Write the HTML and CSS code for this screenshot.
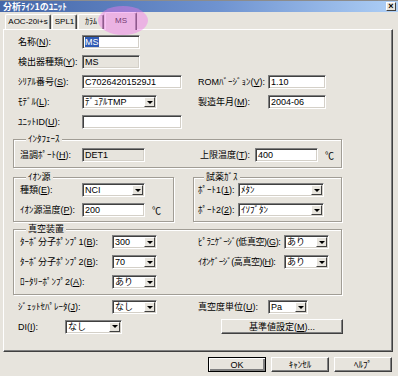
FILE: index.html
```html
<!DOCTYPE html>
<html lang="ja">
<head>
    <meta charset="UTF-8">
    <title>分析ﾗｲﾝ1のﾕﾆｯﾄ</title>
    <link rel="stylesheet" href="styles.css">
</head>
<body>

<div class="window">
    <!-- タイトルバー -->
    <div class="titlebar">
        <span class="title">分析ﾗｲﾝ1のﾕﾆｯﾄ</span>
        <span class="close">×</span>
    </div>

    <!-- タブ -->
    <div class="tabs">
        <div class="tab t-aoc">AOC-20i+s</div>
        <div class="tab t-spl">SPL1</div>
        <div class="tab t-col">ｶﾗﾑ</div>
        <div class="tab t-ms active">MS</div>
    </div>

    <div class="panel">
        <!-- 基本情報 -->
        <div class="info">
            <div class="row">
                <span class="lbl w64">名称(<u>N</u>):</span>
                <span class="edit w58"><span class="selected">MS</span></span>
            </div>
            <div class="row">
                <span class="lbl w64">検出器種類(<u>Y</u>):</span>
                <span class="edit ro w58">MS</span>
            </div>
            <div class="row">
                <span class="lbl w64">ｼﾘｱﾙ番号(<u>S</u>):</span>
                <span class="edit w100">C70264201529J1</span>
                <span class="lbl w70 gap16">ROMﾊﾞｰｼﾞｮﾝ(<u>V</u>):</span>
                <span class="edit w58">1.10</span>
            </div>
            <div class="row">
                <span class="lbl w64">ﾓﾃﾞﾙ(<u>L</u>):</span>
                <span class="combo w75"><span class="val">ﾃﾞｭｱﾙTMP</span><span class="drop"></span></span>
                <span class="lbl w70 gap41">製造年月(<u>M</u>):</span>
                <span class="edit w58">2004-06</span>
            </div>
            <div class="row">
                <span class="lbl w64">ﾕﾆｯﾄID(<u>U</u>):</span>
                <span class="edit w100"></span>
            </div>
        </div>

        <!-- インタフェース -->
        <div class="group g-iface">
            <div class="group-title">ｲﾝﾀﾌｪｰｽ</div>
            <div class="row">
                <span class="lbl w62">温調ﾎﾟｰﾄ(<u>H</u>):</span>
                <span class="edit ro w63">DET1</span>
                <span class="lbl w55 gap55">上限温度(<u>T</u>):</span>
                <span class="edit w63">400</span>
                <span class="unit">℃</span>
            </div>
        </div>

        <div class="pair">
            <!-- イオン源 -->
            <div class="group g-ion">
                <div class="group-title">ｲｵﾝ源</div>
                <div class="row">
                    <span class="lbl w62">種類(<u>E</u>):</span>
                    <span class="combo w63"><span class="val">NCI</span><span class="drop"></span></span>
                </div>
                <div class="row">
                    <span class="lbl w62">ｲｵﾝ源温度(<u>P</u>):</span>
                    <span class="edit w63">200</span>
                    <span class="unit">℃</span>
                </div>
            </div>

            <!-- 試薬ガス -->
            <div class="group g-gas">
                <div class="group-title">試薬ｶﾞｽ</div>
                <div class="row">
                    <span class="lbl w40">ﾎﾟｰﾄ1(<u>1</u>):</span>
                    <span class="combo w86"><span class="val">ﾒﾀﾝ</span><span class="drop"></span></span>
                </div>
                <div class="row">
                    <span class="lbl w40">ﾎﾟｰﾄ2(<u>2</u>):</span>
                    <span class="combo w86"><span class="val">ｲｿﾌﾞﾀﾝ</span><span class="drop"></span></span>
                </div>
            </div>
        </div>

        <!-- 真空装置 -->
        <div class="group g-vac">
            <div class="group-title">真空装置</div>
            <div class="row">
                <span class="lbl w92">ﾀｰﾎﾞ分子ﾎﾟﾝﾌﾟ1(<u>B</u>):</span>
                <span class="combo w45"><span class="val">300</span><span class="drop"></span></span>
                <span class="lbl narrow w86 gap41">ﾋﾟﾗﾆｹﾞｰｼﾞ(低真空)(<u>G</u>):</span>
                <span class="combo w45"><span class="val">あり</span><span class="drop"></span></span>
            </div>
            <div class="row">
                <span class="lbl w92">ﾀｰﾎﾞ分子ﾎﾟﾝﾌﾟ2(<u>B</u>):</span>
                <span class="combo w45"><span class="val">70</span><span class="drop"></span></span>
                <span class="lbl narrow w86 gap41">ｲｵﾝｹﾞｰｼﾞ(高真空)(<u>H</u>):</span>
                <span class="combo w45"><span class="val">あり</span><span class="drop"></span></span>
            </div>
            <div class="row">
                <span class="lbl w92">ﾛｰﾀﾘｰﾎﾟﾝﾌﾟ2(<u>A</u>):</span>
                <span class="combo w45"><span class="val">あり</span><span class="drop"></span></span>
            </div>
        </div>

        <div class="extra">
            <div class="row">
                <span class="lbl w94">ｼﾞｪｯﾄｾﾊﾟﾚｰﾀ(<u>J</u>):</span>
                <span class="combo w45"><span class="val">なし</span><span class="drop"></span></span>
                <span class="lbl w70 gap41">真空度単位(<u>U</u>):</span>
                <span class="combo w40"><span class="val">Pa</span><span class="drop"></span></span>
            </div>
            <div class="row row-btn">
                <span class="lbl w47">DI(<u>I</u>):</span>
                <span class="combo w57"><span class="val">なし</span><span class="drop"></span></span>
                <button class="btn w122 gap99">基準値設定(<u>M</u>)...</button>
            </div>
        </div>
    </div>

    <div class="buttons">
        <button class="btn default">OK</button>
        <button class="btn">ｷｬﾝｾﾙ</button>
        <button class="btn">ﾍﾙﾌﾟ</button>
    </div>

    <!-- 強調の丸 -->
    <div class="mark"></div>
</div>

</body>
</html>
```

FILE: styles.css
```css
* {
    box-sizing: border-box;
}
body {
    margin: 0;
    background: #e7e4dd;
    font-family: "Liberation Sans", "Noto Sans CJK JP", sans-serif;
    font-size: 9px;
    color: #000;
}
.window {
    width: 398px;
    height: 376px;
    position: relative;
    overflow: hidden;
}
u {
    text-decoration: underline;
    text-underline-offset: 1px;
}

/* タイトルバー */
.titlebar {
    height: 12px;
    border-top: 1px solid #8c8c8c;
    background: linear-gradient(to right, #4466a8, #6f93d0 55%, #aecff6);
    display: flex;
    align-items: center;
    justify-content: space-between;
    padding: 0 2px 0 3px;
}
.title {
    color: #fff;
    font-family: "Noto Sans CJK JP", sans-serif;
    font-size: 9px;
    font-weight: bold;
    line-height: 10px;
}
.close {
    width: 10px;
    height: 9px;
    background: #e7e4dd;
    border: 1px solid;
    border-color: #fff #404040 #404040 #fff;
    font-size: 9px;
    font-weight: bold;
    line-height: 7px;
    text-align: center;
}

/* タブ */
.tabs {
    height: 17px;
    display: flex;
    align-items: flex-end;
    padding-left: 5px;
    font-size: 8px;
}
.tab {
    height: 15px;
    border: 1px solid;
    border-bottom: none;
    border-color: #fff #404040 #fff #fff;
    box-shadow: inset -1px 0 #808080;
    border-radius: 2px 2px 0 0;
    line-height: 13px;
    text-align: center;
    white-space: nowrap;
    margin-right: 1px;
}
.t-aoc { width: 46px; }
.t-spl { width: 25px; }
.t-col { width: 26px; }
.t-ms { width: 32px; }
.tab.active {
    height: 18px;
    margin-bottom: -1px;
    background: #e7e4dd;
    position: relative;
    z-index: 1;
    line-height: 15px;
}

/* パネル */
.panel {
    margin: 0 5px 0 3px;
    height: 323px;
    border: 1px solid;
    border-color: #fff #404040 #404040 #fff;
    box-shadow: inset -1px -1px #808080;
    padding: 5px 0 0 9px;
}
.row {
    display: flex;
    align-items: center;
    height: 14px;
}
.row + .row {
    margin-top: 6px;
}
.lbl {
    flex: none;
    white-space: nowrap;
    line-height: 14px;
}
.narrow {
    letter-spacing: -0.45px;
}
.info, .extra {
    margin-left: 5px;
}

.edit, .combo {
    flex: none;
    height: 14px;
    background: #fff;
    border: 1px solid;
    border-color: #808080 #fff #fff #808080;
    box-shadow: inset 1px 1px #404040, inset -1px -1px #d4d0c8;
    padding: 0 2px;
    line-height: 12px;
    white-space: nowrap;
    overflow: hidden;
}
.edit.ro {
    background: #e7e4dd;
}
.selected {
    background: #2f5bb5;
    color: #fff;
}
.combo {
    display: flex;
    align-items: center;
    justify-content: space-between;
    padding-right: 1px;
}
.drop {
    width: 11px;
    height: 10px;
    background: #e7e4dd;
    border: 1px solid;
    border-color: #fff #404040 #404040 #fff;
    display: flex;
    align-items: center;
    justify-content: center;
}
.drop::after {
    content: "";
    border-left: 3px solid transparent;
    border-right: 3px solid transparent;
    border-top: 3px solid #000;
}
.unit {
    margin-left: 7px;
}

/* グループボックス */
.group {
    border: 1px solid #a19d95;
    box-shadow: inset 1px 1px #fff, 1px 1px #fff;
    padding: 0 6px 5px 6px;
}
.group-title {
    display: table;
    margin: -7px 0 0 6px;
    padding: 0 2px;
    background: #e7e4dd;
    line-height: 12px;
}
.g-iface {
    width: 329px;
    margin-top: 10px;
}
.g-iface .row {
    margin-top: 3px;
}
.pair {
    display: flex;
    gap: 19px;
    margin-top: 9px;
}
.g-ion {
    width: 161px;
    padding-bottom: 4px;
}
.g-gas {
    width: 149px;
    padding: 0 4px 4px 4px;
}
.g-ion .row:first-of-type, .g-gas .row:first-of-type {
    margin-top: 4px;
}
.g-vac {
    width: 329px;
    margin-top: 7px;
}
.g-vac .row:first-of-type {
    margin-top: 6px;
}
.extra {
    margin-top: 5px;
}
.extra .row + .row {
    margin-top: 5px;
}
.row-btn {
    height: 15px;
}

/* ボタン */
.btn {
    flex: none;
    height: 15px;
    padding: 0;
    font: inherit;
    color: #000;
    background: #e7e4dd;
    border: 1px solid;
    border-color: #fff #404040 #404040 #fff;
    box-shadow: inset -1px -1px #808080;
    line-height: 12px;
}
.btn.default {
    border-color: #000;
    box-shadow: inset 1px 1px #fff, inset -2px -2px #808080;
}
.buttons {
    display: flex;
    justify-content: flex-end;
    gap: 5px;
    margin-top: 5px;
    padding-right: 6px;
}
.buttons .btn {
    width: 58px;
}

/* 幅 */
.w40 { width: 40px; }
.w45 { width: 45px; }
.w47 { width: 47px; }
.w55 { width: 55px; }
.w57 { width: 57px; }
.w58 { width: 58px; }
.w62 { width: 62px; }
.w63 { width: 63px; }
.w64 { width: 64px; }
.w70 { width: 70px; }
.w75 { width: 75px; }
.w86 { width: 86px; }
.w92 { width: 92px; }
.w94 { width: 94px; }
.w100 { width: 100px; }
.w122 { width: 122px; }
.gap16 { margin-left: 16px; }
.gap41 { margin-left: 41px; }
.gap55 { margin-left: 55px; }
.gap99 { margin-left: 99px; }

/* ピンクの丸 (MSタブ) */
.mark {
    position: absolute;
    left: 98px;
    top: 6px;
    width: 50px;
    height: 29px;
    border-radius: 50%;
    background: rgba(240, 120, 235, 0.45);
    filter: blur(0.6px);
    z-index: 2;
}
```
